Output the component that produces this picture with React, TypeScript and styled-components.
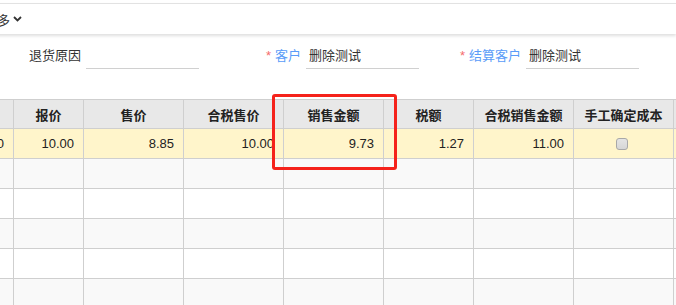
import React from "react";
import styled, { createGlobalStyle } from "styled-components";

const Global = createGlobalStyle`
  html, body { margin: 0; padding: 0; background: #fff; }
  body { font-family: "Liberation Sans", "Noto Sans CJK SC", sans-serif; font-size: 13px; color: #333; }
  * { box-sizing: border-box; }
`;

const Page = styled.div`
  width: 676px;
  height: 305px;
  overflow: hidden;
  position: relative;
  padding-top: 3px;
`;

const Toolbar = styled.div`
  height: 31px;
  border-top: 1px solid #e2e2e2;
  background: #fff;
  box-shadow: 0 2px 3px rgba(0, 0, 0, 0.13);
  display: flex;
  align-items: center;
  gap: 3px;
  margin-left: -3px;
  position: relative;
  z-index: 1;
`;

const MoreText = styled.span`
  font-size: 13px;
  color: #333;
`;

const Form = styled.div`
  display: flex;
  align-items: flex-start;
  padding-top: 11px;
  height: 65px;
`;

const Field = styled.div`
  width: 220px;
  display: flex;
  align-items: flex-start;
`;

const Label = styled.div<{ $link?: boolean }>`
  width: 86px;
  padding-right: 5px;
  text-align: right;
  height: 24px;
  line-height: 22px;
  white-space: nowrap;
  color: ${(p) => (p.$link ? "#5a9cf8" : "#333")};
`;

const Star = styled.span`
  color: #f56c6c;
  margin-right: 4px;
`;

const Input = styled.div`
  width: 113px;
  height: 24px;
  border-bottom: 1px solid #d0d0d0;
  padding-left: 3px;
  line-height: 22px;
  color: #333;
`;

const GridWrap = styled.div`
  position: relative;
  width: 676px;
`;

const GridClip = styled.div`
  overflow: hidden;
  width: 676px;
`;

const cols = "100px 70px 100px 100px 100px 90px 100px 100px 100px";

const Row = styled.div<{ $bg: string; $head?: boolean }>`
  display: grid;
  grid-template-columns: ${cols};
  margin-left: -86px;
  width: 860px;
  height: 30px;
  background: ${(p) => p.$bg};
  border-bottom: 1px solid #cfcfcf;
  border-top: ${(p) => (p.$head ? "1px solid #cfcfcf" : "none")};
  font-weight: ${(p) => (p.$head ? "bold" : "normal")};
`;

const Cell = styled.div<{ $align?: string }>`
  border-right: 1px solid #cfcfcf;
  display: flex;
  align-items: center;
  justify-content: ${(p) => p.$align || "flex-end"};
  padding-right: ${(p) => (p.$align === "center" ? "0" : "9px")};
  white-space: nowrap;
  overflow: hidden;
  color: #222;
`;

const Check = styled.div`
  width: 12px;
  height: 12px;
  border: 1px solid #a8a8a8;
  border-radius: 3px;
  background: linear-gradient(#e4e4e4, #d6d6d6);
  margin-right: 4px;
`;

const Highlight = styled.div`
  position: absolute;
  left: 272px;
  top: -5px;
  width: 125px;
  height: 76px;
  border: 3px solid #f5221b;
  border-radius: 3px;
  pointer-events: none;
`;

const heads = ["", "报价", "售价", "合税售价", "销售金额", "税额", "合税销售金额", "手工确定成本", ""];
const data = ["10.00", "10.00", "8.85", "10.00", "9.73", "1.27", "11.00", "CHECK", ""];

export default function App() {
  const empty = [1, 2, 3, 4, 5];
  return (
    <Page>
      <Global />
      <Toolbar>
        <MoreText>多</MoreText>
        <svg width="9" height="6" viewBox="0 0 9 6">
          <path d="M1 1 L4.5 4.5 L8 1" fill="none" stroke="#333" strokeWidth="1.8" />
        </svg>
      </Toolbar>
      <Form>
        <Field>
          <Label>退货原因</Label>
          <Input />
        </Field>
        <Field>
          <Label $link>
            <Star>*</Star>客户
          </Label>
          <Input>删除测试</Input>
        </Field>
        <Field>
          <Label $link>
            <Star>*</Star>结算客户
          </Label>
          <Input>删除测试</Input>
        </Field>
      </Form>
      <GridWrap>
        <GridClip>
          <Row $bg="#e8e8e8" $head>
            {heads.map((h, i) => (
              <Cell key={i} $align="center">
                {h}
              </Cell>
            ))}
          </Row>
          <Row $bg="#fff5cb">
            {data.map((d, i) =>
              d === "CHECK" ? (
                <Cell key={i} $align="center">
                  <Check />
                </Cell>
              ) : (
                <Cell key={i}>{d}</Cell>
              )
            )}
          </Row>
          {empty.map((r) => (
            <Row key={r} $bg={r % 2 === 1 ? "#f9f9f9" : "#fff"}>
              {heads.map((_, i) => (
                <Cell key={i} />
              ))}
            </Row>
          ))}
        </GridClip>
        <Highlight />
      </GridWrap>
    </Page>
  );
}
